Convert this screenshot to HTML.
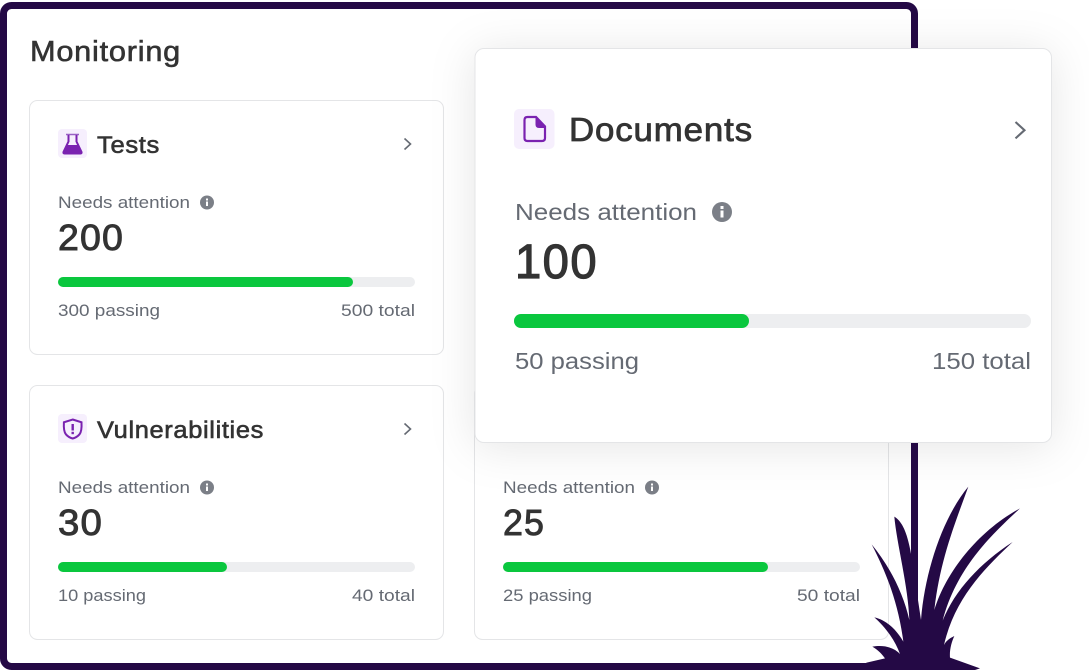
<!DOCTYPE html>
<html lang="en">
<head>
<meta charset="utf-8">
<title>Monitoring</title>
<style>
html,body{margin:0;padding:0;background:#fff;width:1089px;height:670px;overflow:hidden}
svg{display:block;position:absolute;left:0;top:0}
text{font-family:"Liberation Sans",sans-serif}
.h{font-weight:400;fill:#333;stroke:#333;stroke-width:.6px;letter-spacing:.025em}
.b{font-weight:400;fill:#333;stroke:#333;stroke-width:.9px;letter-spacing:.03em}
.s{fill:#656a73}
</style>
</head>
<body>
<svg width="1089" height="670" viewBox="0 0 1089 670" xmlns="http://www.w3.org/2000/svg">
  <!-- frame -->
  <rect x="3.500" y="5.500" width="911" height="661" rx="8" fill="#fff" stroke="#240945" stroke-width="7"/>
  <text x="30" y="61" font-size="29" class="h" textLength="151" lengthAdjust="spacingAndGlyphs">Monitoring</text>

  <!-- Tests card -->
  <rect x="29.500" y="100.500" width="414" height="254" rx="8" fill="#fff" stroke="#e4e5e7"/>
  <rect x="58" y="129" width="29" height="29" rx="4" fill="#f6effd"/>
  <path d="M66 134.500h13" fill="none" stroke="#9a62c4" stroke-width="1.500"/>
  <path d="M68.500 135v6.500l-5 10.500q-.5 1.500 1 1.500h16q1.500 0 1-1.500l-5-10.500V135" fill="none" stroke="#7a22b0" stroke-width="2"/>
  <path d="M67.500 145h10l4.500 8.500h-19z" fill="#7a22b0"/>
  <text x="97" y="153" font-size="24" class="h" textLength="63" lengthAdjust="spacingAndGlyphs">Tests</text>
  <path d="M404.500 138.500l6 5.500-6 5.500" fill="none" stroke="#656a73" stroke-width="1.600"/>
  <text x="58" y="208" font-size="16.500" class="s" textLength="132" lengthAdjust="spacingAndGlyphs">Needs attention</text>
  <circle cx="207" cy="202.500" r="7" fill="#7b7f87"/>
  <rect x="206" y="201.500" width="2" height="4.500" fill="#fff"/><rect x="206" y="198.500" width="2" height="2" fill="#fff"/>
  <text x="58" y="250" font-size="36" class="b" textLength="66" lengthAdjust="spacingAndGlyphs">200</text>
  <rect x="58" y="277" width="357" height="10" rx="5" fill="#edeef0"/>
  <rect x="58" y="277" width="295" height="10" rx="5" fill="#0ac73e"/>
  <text x="58" y="316" font-size="16.500" class="s" textLength="102" lengthAdjust="spacingAndGlyphs">300 passing</text>
  <text x="341" y="316" font-size="16.500" class="s" textLength="74" lengthAdjust="spacingAndGlyphs">500 total</text>

  <!-- Vulnerabilities card -->
  <rect x="29.500" y="385.500" width="414" height="254" rx="8" fill="#fff" stroke="#e4e5e7"/>
  <rect x="58" y="414" width="29" height="29" rx="4" fill="#f6effd"/>
  <path d="M72.700 419.500l8.800 2.800q.5 9-2 12-2.500 3-6.800 4.200-4.300-1.200-6.800-4.200-2.500-3-2-12z" fill="none" stroke="#7a22b0" stroke-width="2"/>
  <rect x="71.500" y="424" width="2.400" height="6.500" fill="#7a22b0"/><rect x="71.500" y="431.800" width="2.400" height="2.400" fill="#7a22b0"/>
  <text x="97" y="438" font-size="24" class="h" textLength="167" lengthAdjust="spacingAndGlyphs">Vulnerabilities</text>
  <path d="M404.500 423.500l6 5.500-6 5.500" fill="none" stroke="#656a73" stroke-width="1.600"/>
  <text x="58" y="493" font-size="16.500" class="s" textLength="132" lengthAdjust="spacingAndGlyphs">Needs attention</text>
  <circle cx="207" cy="487.500" r="7" fill="#7b7f87"/>
  <rect x="206" y="486.500" width="2" height="4.500" fill="#fff"/><rect x="206" y="483.500" width="2" height="2" fill="#fff"/>
  <text x="58" y="535" font-size="36" class="b" textLength="45" lengthAdjust="spacingAndGlyphs">30</text>
  <rect x="58" y="562" width="357" height="10" rx="5" fill="#edeef0"/>
  <rect x="58" y="562" width="169" height="10" rx="5" fill="#0ac73e"/>
  <text x="58" y="601" font-size="16.500" class="s" textLength="88" lengthAdjust="spacingAndGlyphs">10 passing</text>
  <text x="352" y="601" font-size="16.500" class="s" textLength="63" lengthAdjust="spacingAndGlyphs">40 total</text>

  <!-- Bottom right card -->
  <rect x="474.500" y="385.500" width="414" height="254" rx="8" fill="#fff" stroke="#e4e5e7"/>
  <text x="503" y="493" font-size="16.500" class="s" textLength="132" lengthAdjust="spacingAndGlyphs">Needs attention</text>
  <circle cx="652" cy="487.500" r="7" fill="#7b7f87"/>
  <rect x="651" y="486.500" width="2" height="4.500" fill="#fff"/><rect x="651" y="483.500" width="2" height="2" fill="#fff"/>
  <text x="503" y="535" font-size="36" class="b" textLength="42" lengthAdjust="spacingAndGlyphs">25</text>
  <rect x="503" y="562" width="357" height="10" rx="5" fill="#edeef0"/>
  <rect x="503" y="562" width="265" height="10" rx="5" fill="#0ac73e"/>
  <text x="503" y="601" font-size="16.500" class="s" textLength="89" lengthAdjust="spacingAndGlyphs">25 passing</text>
  <text x="797" y="601" font-size="16.500" class="s" textLength="63" lengthAdjust="spacingAndGlyphs">50 total</text>

  <!-- Documents card -->
  <rect x="475" y="48.500" width="576.500" height="394" rx="9" fill="#fff" stroke="#e4e5e7" style="filter:drop-shadow(0 4px 22px rgba(0,0,0,.1))"/>
  <rect x="514" y="109" width="40.500" height="40" rx="5" fill="#f6effd"/>
  <path d="M527.500 117h8.500l9 9.500V138q0 3-3 3h-14.500q-3 0-3-3V120q0-3 3-3z" fill="none" stroke="#7a22b0" stroke-width="2.200"/>
  <path d="M535.500 117l9.500 9.500v1.500h-6q-3.500 0-3.500-3.500z" fill="#7a22b0"/>
  <text x="569" y="141" font-size="33" class="h" textLength="184" lengthAdjust="spacingAndGlyphs" style="stroke-width:.8px">Documents</text>
  <path d="M1015.500 122l9 8.200-9 8.200" fill="none" stroke="#656a73" stroke-width="2.100"/>
  <text x="515" y="220" font-size="23" class="s" textLength="182" lengthAdjust="spacingAndGlyphs">Needs attention</text>
  <circle cx="722" cy="212" r="10" fill="#7b7f87"/>
  <rect x="720.500" y="210.500" width="3" height="7" fill="#fff"/><rect x="720.500" y="206" width="3" height="3" fill="#fff"/>
  <text x="515" y="278" font-size="48" class="b" textLength="83" lengthAdjust="spacingAndGlyphs" style="stroke-width:1.200px">100</text>
  <rect x="514" y="314" width="517" height="14" rx="7" fill="#edeef0"/>
  <rect x="514" y="314" width="235" height="14" rx="7" fill="#0ac73e"/>
  <text x="515" y="369" font-size="23" class="s" textLength="124" lengthAdjust="spacingAndGlyphs">50 passing</text>
  <text x="932" y="369" font-size="23" class="s" textLength="99" lengthAdjust="spacingAndGlyphs">150 total</text>

  <!-- vertical frame line below Documents card -->
  <rect x="911" y="443" width="7" height="227" fill="#240945"/>

  <!-- grass -->
  <g transform="translate(840 470) scale(.33333)">
    <path fill="#240945" d="M40 600L80 578L135 565C120 545 110 538 97 530C135 523 165 535 180 552C165 510 135 470 103 442C140 450 170 480 190 515C175 400 140 310 95 223C150 290 190 370 208 450C205 350 170 220 163 140C195 160 210 210 225 330L243 450C255 300 310 140 385 50C345 160 300 270 283 420C320 300 420 180 540 115C460 190 350 290 308 452C345 360 420 280 518 216C440 290 345 380 312 525C320 510 330 505 343 498C335 515 328 540 330 563L420 595L405 600Z"/>
  </g>
</svg>
</body>
</html>
